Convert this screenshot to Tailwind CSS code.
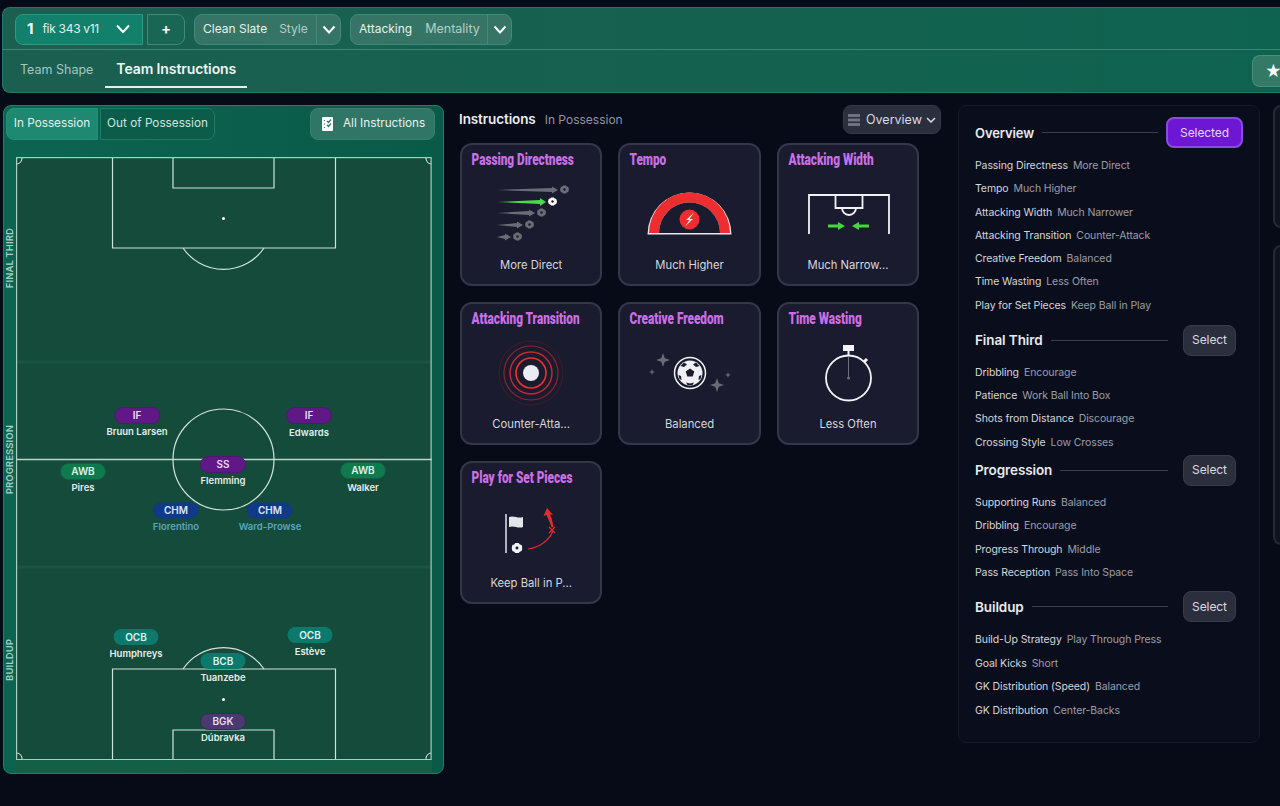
<!DOCTYPE html>
<html lang="en">
<head>
  <meta charset="UTF-8" />
  <title>Team Instructions</title>
  <script src="https://cdn.jsdelivr.net/npm/@tailwindcss/browser@4"></script>
</head>
<body class="bg-[#070b18] text-white font-['Inter','Noto_Sans',sans-serif] w-[1280px] h-[806px] overflow-hidden">
  <svg class="hidden">
    <symbol id="ball" viewBox="0 0 12 12">
      <path d="M4.2.6h3.6l1.3 1.5 1.9.6.6 2.1L12 6l-.4 1.3-.6 2-1.9.7-1.3 1.4H4.2L2.9 10 1 9.3l-.6-2L0 6l.4-1.2.6-2.1 1.9-.6z" fill="currentColor"/>
      <circle cx="6" cy="6" r="1.6" fill="#1a1b2e"/>
    </symbol>
  </svg>

  <!-- HEADER -->
  <header class="absolute left-[2px] right-0 top-[7px] h-[86px] rounded-l-lg border border-r-0 border-[#1f7a64] bg-gradient-to-r from-[#1b5f50] to-[#0e6350] text-[12px]">
    <div class="h-[42px] border-b border-[#3b8674] flex items-center pl-[12px] pt-[1px]">
      <div class="w-[128px] h-[31px] rounded-l-lg border border-[#2a9a82] bg-[#12806b] flex items-center pl-[11px]">
        <span class="font-bold text-[15px] mr-[9px]">1</span>
        <span class="text-[#e4f0ec] tracking-[-0.3px]">fik 343 v11</span>
        <svg class="ml-[16px]" width="16" height="10" viewBox="0 0 16 10"><path d="M2 1.5l6 6.5 6-6.500" fill="none" stroke="#fff" stroke-width="2"/></svg>
      </div>
      <div class="ml-[4px] w-[38px] h-[31px] rounded-r-lg border border-[#3f8a78] bg-[#1a6654] flex items-center justify-center text-[15px] font-semibold">+</div>
      <div class="ml-[9px] w-[147px] h-[31px] rounded-lg border border-[#3f8a78] bg-[#367565] flex items-center pl-[8px]">
        <span class="text-[#e8f0ed]">Clean Slate</span>
        <span class="ml-[12px] text-[#b5cdc6]">Style</span>
        <span class="ml-auto w-[24px] h-full border-l border-[#4b8576] flex items-center justify-center">
          <svg width="14" height="9" viewBox="0 0 14 9"><path d="M1.500 1.500l5.500 6 5.500-6" fill="none" stroke="#fff" stroke-width="2"/></svg>
        </span>
      </div>
      <div class="ml-[9px] w-[162px] h-[31px] rounded-lg border border-[#3f8a78] bg-[#367565] flex items-center pl-[8px]">
        <span class="text-[#e8f0ed]">Attacking</span>
        <span class="ml-[13px] text-[12.500px] text-[#b5cdc6]">Mentality</span>
        <span class="ml-auto w-[24px] h-full border-l border-[#4b8576] flex items-center justify-center">
          <svg width="14" height="9" viewBox="0 0 14 9"><path d="M1.500 1.500l5.500 6 5.500-6" fill="none" stroke="#fff" stroke-width="2"/></svg>
        </span>
      </div>
    </div>
    <div class="relative h-[43px] flex">
      <div class="pl-[17px] pt-[11px] text-[12.500px] text-[#a9c6be]">Team Shape</div>
      <div class="ml-[12px] w-[142px] h-[38px] px-[11px] pt-[8px] font-semibold text-[#eef6f3] border-b-2 border-[#dff2ec] text-[14px] tracking-[-0.1px]">Team Instructions</div>
      <div class="absolute right-0 top-[5px] w-[28px] h-[32px] rounded-l-lg border border-r-0 border-[#4c8e7e] bg-[#347866] flex items-center pl-[12px] text-[16px] leading-none">★</div>
    </div>
  </header>

  <main class="absolute left-[3px] top-[105px] flex items-start">
    <!-- PITCH PANEL -->
    <section class="w-[441px] h-[669px] rounded-lg border border-[#1f8069] bg-gradient-to-r from-[#0c6450] to-[#0a5a48] relative">
      <div class="flex items-start h-[51px] pt-[2px] pl-[2px] text-[11.750px]">
        <div class="w-[92px] h-[32px] rounded-l-lg bg-[#1e8870] border border-[#26917a] flex items-center justify-center text-[#e2f1ec]">In Possession</div>
        <div class="ml-[2px] w-[115px] h-[32px] rounded-r-lg bg-[#0c5c4a] border border-[#1a7d67] flex items-center justify-center text-[#cfe4de]">Out of Possession</div>
        <div class="ml-auto mr-[8px] w-[125px] h-[32px] rounded-lg bg-[#2f7667] border border-[#3a8070] flex items-center pl-[11px] text-[#e8f1ee]">
          <svg width="11" height="14" viewBox="0 0 11 14"><rect width="11" height="14" rx="1" fill="#fff"/><path d="M2 3.500h1M2 7h1M2 10.500h1M5 4l1.500 1.500L9 2.500M5 8l1.500 1.500L9 6.500" stroke="#2f7667" stroke-width="1.200" fill="none"/></svg>
          <span class="ml-[10px]">All Instructions</span>
        </div>
      </div>

      <!-- third labels -->
      <div class="absolute left-0 top-[51px] w-[12px] h-[603px] flex flex-col text-[9.500px] font-semibold text-[#a9cfc3] tracking-[0.1px]">
        <div class="h-[203px] flex items-center justify-center"><span class="[writing-mode:vertical-rl] rotate-180 whitespace-nowrap">FINAL THIRD</span></div>
        <div class="h-[200px] flex items-center justify-center"><span class="[writing-mode:vertical-rl] rotate-180 whitespace-nowrap">PROGRESSION</span></div>
        <div class="h-[200px] flex items-center justify-center"><span class="[writing-mode:vertical-rl] rotate-180 whitespace-nowrap">BUILDUP</span></div>
      </div>

      <!-- pitch -->
      <div class="absolute left-[12px] top-[51px] w-[416px] h-[603px] bg-[#144b3a]">
        <svg class="absolute inset-0" width="416" height="603" viewBox="0 0 416 603" fill="none" stroke="#cfe5dc" stroke-width="1.200">
          <path d="M0 205h416M0 410h416" stroke="#1a5543" stroke-width="3"/>
          <rect x="0.600" y="0.600" width="414.500" height="602" stroke="#a9cdbf"/>
          <path d="M96.500 1v90h223V1M157 1v30h101V1"/>
          <path d="M167 91a49 49 0 0 0 81 0"/>
          <path d="M0 302.500h416" stroke="#b9d6ca" stroke-width="1.500"/>
          <circle cx="207.500" cy="302.500" r="50.500"/>
          <path d="M96.500 602v-90h223v90M157 602v-29h101v29"/>
          <path d="M167 512a49 49 0 0 1 81 0"/>
          <path d="M1 7a6 6 0 0 0 5-6M415 7a6 6 0 0 1-5-6M1 596a6 6 0 0 1 5 6M415 596a6 6 0 0 0-5 6"/>
          <circle cx="207.500" cy="61.500" r="1.500" fill="#fff" stroke="none"/>
          <circle cx="207.500" cy="542.500" r="1.500" fill="#fff" stroke="none"/>
        </svg>

        <!-- players -->
        <div class="absolute left-[121px] top-[250px] -translate-x-1/2 flex flex-col items-center text-[9.500px] font-semibold whitespace-nowrap">
          <div class="w-[46px] h-[17px] rounded-full bg-[#5f1886] border border-[#4b1a6c] flex items-center justify-center text-[10px] text-[#eadcf3]">IF</div>
          <div class="mt-[1px] text-[#e4efea]">Bruun Larsen</div>
        </div>
        <div class="absolute left-[293px] top-[250px] -translate-x-1/2 flex flex-col items-center text-[9.500px] font-semibold whitespace-nowrap">
          <div class="w-[46px] h-[17px] rounded-full bg-[#5f1886] border border-[#4b1a6c] flex items-center justify-center text-[10px] text-[#eadcf3]">IF</div>
          <div class="mt-[2px] text-[#e4efea]">Edwards</div>
        </div>
        <div class="absolute left-[67px] top-[306px] -translate-x-1/2 flex flex-col items-center text-[9.500px] font-semibold whitespace-nowrap">
          <div class="w-[46px] h-[17px] rounded-full bg-[#0f7a4e] border border-[#125f44] flex items-center justify-center text-[10px] text-[#e0f2ea]">AWB</div>
          <div class="mt-[1px] text-[#e4efea]">Pires</div>
        </div>
        <div class="absolute left-[347px] top-[305px] -translate-x-1/2 flex flex-col items-center text-[9.500px] font-semibold whitespace-nowrap">
          <div class="w-[46px] h-[17px] rounded-full bg-[#0f7a4e] border border-[#125f44] flex items-center justify-center text-[10px] text-[#e0f2ea]">AWB</div>
          <div class="mt-[2px] text-[#e4efea]">Walker</div>
        </div>
        <div class="absolute left-[207px] top-[299px] -translate-x-1/2 flex flex-col items-center text-[9.500px] font-semibold whitespace-nowrap">
          <div class="w-[46px] h-[17px] rounded-full bg-[#5f1886] border border-[#4b1a6c] flex items-center justify-center text-[10px] text-[#eadcf3]">SS</div>
          <div class="mt-[1px] text-[#e4efea]">Flemming</div>
        </div>
        <div class="absolute left-[160px] top-[345px] -translate-x-1/2 flex flex-col items-center text-[9.500px] font-semibold whitespace-nowrap">
          <div class="w-[46px] h-[17px] rounded-full bg-[#10398a] border border-[#123f68] flex items-center justify-center text-[10px] text-[#dde7f5]">CHM</div>
          <div class="mt-[1px] text-[#5ba6bf]">Florentino</div>
        </div>
        <div class="absolute left-[254px] top-[345px] -translate-x-1/2 flex flex-col items-center text-[9.500px] font-semibold whitespace-nowrap">
          <div class="w-[46px] h-[17px] rounded-full bg-[#10398a] border border-[#123f68] flex items-center justify-center text-[10px] text-[#dde7f5]">CHM</div>
          <div class="mt-[1px] text-[#5ba6bf]">Ward-Prowse</div>
        </div>
        <div class="absolute left-[120px] top-[472px] -translate-x-1/2 flex flex-col items-center text-[9.500px] font-semibold whitespace-nowrap">
          <div class="w-[45px] h-[16px] rounded-full bg-[#0b7a6c] flex items-center justify-center text-[10px] text-[#dff1ed]">OCB</div>
          <div class="mt-[2px] text-[#e4efea]">Humphreys</div>
        </div>
        <div class="absolute left-[294px] top-[470px] -translate-x-1/2 flex flex-col items-center text-[9.500px] font-semibold whitespace-nowrap">
          <div class="w-[45px] h-[16px] rounded-full bg-[#0b7a6c] flex items-center justify-center text-[10px] text-[#dff1ed]">OCB</div>
          <div class="mt-[2px] text-[#e4efea]">Estève</div>
        </div>
        <div class="absolute left-[207px] top-[496px] -translate-x-1/2 flex flex-col items-center text-[9.500px] font-semibold whitespace-nowrap">
          <div class="w-[45px] h-[16px] rounded-full bg-[#0b7a6c] flex items-center justify-center text-[10px] text-[#dff1ed]">BCB</div>
          <div class="mt-[2px] text-[#e4efea]">Tuanzebe</div>
        </div>
        <div class="absolute left-[207px] top-[556px] -translate-x-1/2 flex flex-col items-center text-[9.500px] font-semibold whitespace-nowrap">
          <div class="w-[46px] h-[17px] rounded-full bg-[#4a3a70] border border-[#2f2f55] flex items-center justify-center text-[10px] text-[#e3dfee]">BGK</div>
          <div class="mt-[1px] text-[#e4efea]">Dúbravka</div>
        </div>
      </div>
      <div class="absolute left-[12px] top-[654px] w-[416px] h-[12px] bg-[#146047]"></div>
    </section>

    <!-- INSTRUCTION CARDS -->
    <section class="ml-[15px] w-[482px]">
      <div class="h-[38px] flex items-start">
        <div class="pt-[4px] text-[13.500px] font-semibold text-[#eceef2] tracking-[-0.1px]">Instructions</div>
        <div class="pt-[6px] ml-[9px] text-[12px] text-[#8f94a3]">In Possession</div>
        <div class="ml-auto w-[98px] h-[29px] rounded-lg bg-[#2b2e3d] border border-[#343848] flex items-center pl-[4px] pt-[1px] text-[12.500px] text-[#d9dbe2]">
          <svg width="12" height="12" viewBox="0 0 12 12"><path d="M0 0h12v3H0zM0 4.500h12v3H0zM0 9h12v3H0z" fill="#6f7280"/></svg>
          <span class="ml-[6px]">Overview</span>
          <svg class="ml-[4px]" width="10" height="6" viewBox="0 0 10 6"><path d="M1 1l4 4 4-4" fill="none" stroke="#d9dbe2" stroke-width="1.500"/></svg>
        </div>
      </div>

      <div class="grid grid-cols-[142.400px_142.400px_142.400px] gap-x-[16px] gap-y-[16px] pl-[1px]">
        <div class="h-[143px] rounded-xl border-2 border-[#343748] bg-[#1a1b2e] relative">
          <div class="pl-[13px] pt-[4px] h-[31px] font-['Roboto',sans-serif] font-black text-[16px] leading-[22px] text-[#cb6fe6] origin-left scale-x-[0.735] whitespace-nowrap">Passing Directness</div>
          <svg class="-ml-[2px]" width="143" height="80" viewBox="0 0 143 80">
            <path d="M37 14L92 12V10.500l6 3.500-6 3.500V16z" fill="#6b6c78"/>
            <path d="M37 26L80 24V22l6 4-6 4v-2z" fill="#44dd44"/>
            <path d="M37 37L69 35V33.500l6 3.500-6 3.500V39z" fill="#6b6c78"/>
            <path d="M37 49L57 47V45.500l6 3.500-6 3.500V51z" fill="#6b6c78"/>
            <path d="M37 61L45 59V57.500l6 3.500-6 3.500V63z" fill="#6b6c78"/>
            <use href="#ball" x="100" y="9" width="9" height="9" class="text-[#6b6c78]"/>
            <use href="#ball" x="88" y="21" width="9" height="9" class="text-white"/>
            <use href="#ball" x="77" y="32" width="9" height="9" class="text-[#6b6c78]"/>
            <use href="#ball" x="65" y="44" width="9" height="9" class="text-[#6b6c78]"/>
            <use href="#ball" x="53" y="56" width="9" height="9" class="text-[#6b6c78]"/>
          </svg>
          <div class="absolute left-0 right-0 top-[112px] text-center text-[11.250px] text-[#d6d8df]">More Direct</div>
        </div>

        <div class="h-[143px] rounded-xl border-2 border-[#343748] bg-[#1a1b2e] relative">
          <div class="pl-[13px] pt-[4px] h-[31px] font-['Roboto',sans-serif] font-black text-[16px] leading-[22px] text-[#cb6fe6] origin-left scale-x-[0.735] whitespace-nowrap">Tempo</div>
          <svg class="-ml-[2px]" width="143" height="80" viewBox="0 0 143 80">
            <path d="M29.500 58.500a42 42 0 0 1 84 0z" fill="#e8e8f0"/>
            <path d="M31 57a40.500 40.500 0 0 1 81 0h-10a30.500 30.500 0 0 0-61 0z" fill="#ee2e2e"/>
            <path d="M41 57a30.500 30.500 0 0 1 61 0z" fill="#1a1b2e"/>
            <circle cx="71.500" cy="43.500" r="10" fill="#ee2e2e"/>
            <path d="M76 36.500l-8 7.500h3.500L67 50.500l8-7.500h-3.500z" fill="#f3e6e6"/>
          </svg>
          <div class="absolute left-0 right-0 top-[112px] text-center text-[11.250px] text-[#d6d8df]">Much Higher</div>
        </div>

        <div class="h-[143px] rounded-xl border-2 border-[#343748] bg-[#1a1b2e] relative">
          <div class="pl-[13px] pt-[4px] h-[31px] font-['Roboto',sans-serif] font-black text-[16px] leading-[22px] text-[#cb6fe6] origin-left scale-x-[0.735] whitespace-nowrap">Attacking Width</div>
          <svg class="-ml-[2px]" width="143" height="80" viewBox="0 0 143 80">
            <path d="M32 58V19h80v39M58.500 19v13h27V19M65 32a7 7 0 0 0 14 0" fill="none" stroke="#f2f2f6" stroke-width="1.800"/>
            <path d="M51 48.500h10V46l7 4-7 4v-2.500H51z" fill="#47d63f"/>
            <path d="M92 48.500H82V46l-7 4 7 4v-2.500h10z" fill="#47d63f"/>
          </svg>
          <div class="absolute left-0 right-0 top-[112px] text-center text-[11.250px] text-[#d6d8df]">Much Narrow...</div>
        </div>

        <div class="h-[143px] rounded-xl border-2 border-[#343748] bg-[#1a1b2e] relative">
          <div class="pl-[13px] pt-[4px] h-[31px] font-['Roboto',sans-serif] font-black text-[16px] leading-[22px] text-[#cb6fe6] origin-left scale-x-[0.735] whitespace-nowrap">Attacking Transition</div>
          <svg class="-ml-[2px]" width="143" height="80" viewBox="0 0 143 80" fill="none">
            <circle cx="71" cy="38" r="32" stroke="#3d1d2c" stroke-width="1"/>
            <circle cx="71" cy="38" r="27" stroke="#8a2530" stroke-width="1.200"/>
            <circle cx="71" cy="38" r="21" stroke="#c62a30" stroke-width="1.400"/>
            <circle cx="71" cy="38" r="15" stroke="#ee3030" stroke-width="1.600"/>
            <circle cx="71" cy="38" r="8" fill="#ebebf5"/>
          </svg>
          <div class="absolute left-0 right-0 top-[112px] text-center text-[11.250px] text-[#d6d8df]">Counter-Atta...</div>
        </div>

        <div class="h-[143px] rounded-xl border-2 border-[#343748] bg-[#1a1b2e] relative">
          <div class="pl-[13px] pt-[4px] h-[31px] font-['Roboto',sans-serif] font-black text-[16px] leading-[22px] text-[#cb6fe6] origin-left scale-x-[0.735] whitespace-nowrap">Creative Freedom</div>
          <svg class="-ml-[2px]" width="143" height="80" viewBox="0 0 143 80" fill="none">
            <circle cx="72" cy="38" r="15.500" stroke="#f4f4f8" stroke-width="1.500"/>
            <circle cx="72" cy="38" r="12.500" fill="#efeff4"/>
            <path d="M72 33.500l4.300 3-1.600 5h-5.400l-1.600-5z" fill="#1a1b2e"/>
            <path d="M66 27.500l3 2-3 2.500-3.500-1zM78 27.500l-3 2 3 2.500 3.500-1zM60.500 40l2.500 1 .5 4-2-1zM83.500 40l-2.500 1-.5 4 2-1zM68 47.500l4 1 4-1-1.500 2.500h-5z" fill="#1a1b2e"/>
            <path d="M45 18l1.800 5.200L52 25l-5.200 1.800L45 32l-1.800-5.200L38 25l5.200-1.800z" fill="#696a78"/>
            <path d="M34 34l.8 2.200L37 37l-2.200.8L34 40l-.8-2.200L31 37l2.200-.8z" fill="#696a78"/>
            <path d="M99 43l1.800 5.200L106 50l-5.200 1.800L99 57l-1.800-5.200L92 50l5.200-1.800z" fill="#696a78"/>
            <path d="M110 37l.8 2.200L113 40l-2.200.8-.8 2.200-.8-2.200L107 40l2.200-.8z" fill="#696a78"/>
          </svg>
          <div class="absolute left-0 right-0 top-[112px] text-center text-[11.250px] text-[#d6d8df]">Balanced</div>
        </div>

        <div class="h-[143px] rounded-xl border-2 border-[#343748] bg-[#1a1b2e] relative">
          <div class="pl-[13px] pt-[4px] h-[31px] font-['Roboto',sans-serif] font-black text-[16px] leading-[22px] text-[#cb6fe6] origin-left scale-x-[0.735] whitespace-nowrap">Time Wasting</div>
          <svg class="-ml-[2px]" width="143" height="80" viewBox="0 0 143 80" fill="none">
            <circle cx="71.500" cy="43" r="22.500" stroke="#f4f4f8" stroke-width="1.800"/>
            <path d="M66 10h11v6H66zM70.500 16h2v5h-2z" fill="#f4f4f8"/>
            <path d="M87 27l3-3" stroke="#f4f4f8" stroke-width="3"/>
            <path d="M71.500 22v21" stroke="#6e6f7c" stroke-width="1"/>
            <circle cx="71.500" cy="43" r="1.500" fill="#6e6f7c"/>
          </svg>
          <div class="absolute left-0 right-0 top-[112px] text-center text-[11.250px] text-[#d6d8df]">Less Often</div>
        </div>

        <div class="h-[143px] rounded-xl border-2 border-[#343748] bg-[#1a1b2e] relative">
          <div class="pl-[13px] pt-[4px] h-[31px] font-['Roboto',sans-serif] font-black text-[16px] leading-[22px] text-[#cb6fe6] origin-left scale-x-[0.735] whitespace-nowrap">Play for Set Pieces</div>
          <svg class="-ml-[2px]" width="143" height="80" viewBox="0 0 143 80" fill="none">
            <path d="M46 20v39" stroke="#e4e4ec" stroke-width="1.500"/>
            <path d="M49 23c5-2 9 2 14 0v10c-5 2-9-2-14 0z" fill="#e4e4ec"/>
            <use href="#ball" x="51.500" y="48.500" width="11" height="11" class="text-[#f2f2f6]"/>
            <path d="M68 55c12-2 21-9 25-18" stroke="#e42c2c" stroke-width="1.200"/>
            <path d="M89 33l6 6M95 33l-6 6" stroke="#e42c2c" stroke-width="1.200"/>
            <path d="M93.500 33C92.500 27 91.500 23 90 20.500l3 .5-6-7-3.500 8 3-1C88 25 90.500 29 91.500 33.500z" fill="#e42c2c"/>
          </svg>
          <div class="absolute left-0 right-0 top-[112px] text-center text-[11.250px] text-[#d6d8df]">Keep Ball in P...</div>
        </div>
      </div>
    </section>

    <!-- SUMMARY PANEL -->
    <aside class="ml-[17px] w-[302px] h-[638px] rounded-lg border border-[#151a2a] bg-[#0a0e1c] pl-[16px] pr-[15px] pt-[11px] text-[10.500px] leading-[14px] tracking-[-0.1px]">
      <div class="flex items-center h-[31px]">
        <span class="text-[13px] font-semibold text-[#e8eaee]">Overview</span>
        <span class="ml-[8px] flex-1 h-px bg-[#3a3e4c]"></span>
        <span class="ml-[8px] mr-[1px] w-[77px] h-[31px] rounded-lg bg-[#6d16d4] border-2 border-[#8c4be0] flex items-center justify-center text-[12px] text-[#e6d8fb]">Selected</span>
      </div>
      <div class="mt-[11px] flex flex-col gap-y-[9.300px]">
        <p><span class="text-[#d4d6dc]">Passing Directness</span><span class="ml-[5px] text-[#9a9eaa]">More Direct</span></p>
        <p><span class="text-[#d4d6dc]">Tempo</span><span class="ml-[5px] text-[#9a9eaa]">Much Higher</span></p>
        <p><span class="text-[#d4d6dc]">Attacking Width</span><span class="ml-[5px] text-[#9a9eaa]">Much Narrower</span></p>
        <p><span class="text-[#d4d6dc]">Attacking Transition</span><span class="ml-[5px] text-[#9a9eaa]">Counter-Attack</span></p>
        <p><span class="text-[#d4d6dc]">Creative Freedom</span><span class="ml-[5px] text-[#9a9eaa]">Balanced</span></p>
        <p><span class="text-[#d4d6dc]">Time Wasting</span><span class="ml-[5px] text-[#9a9eaa]">Less Often</span></p>
        <p><span class="text-[#d4d6dc]">Play for Set Pieces</span><span class="ml-[5px] text-[#9a9eaa]">Keep Ball in Play</span></p>
      </div>

      <div class="mt-[12px] flex items-center h-[31px]">
        <span class="text-[13.500px] font-semibold text-[#e8eaee]">Final Third</span>
        <span class="ml-[8px] flex-1 h-px bg-[#3a3e4c]"></span>
        <span class="ml-[15px] mr-[8px] w-[53px] h-[31px] rounded-lg bg-[#2b2e3d] border border-[#383b4a] flex items-center justify-center text-[12px] text-[#d9dbe2]">Select</span>
      </div>
      <div class="mt-[10px] flex flex-col gap-y-[9.300px]">
        <p><span class="text-[#d4d6dc]">Dribbling</span><span class="ml-[5px] text-[#9a9eaa]">Encourage</span></p>
        <p><span class="text-[#d4d6dc]">Patience</span><span class="ml-[5px] text-[#9a9eaa]">Work Ball Into Box</span></p>
        <p><span class="text-[#d4d6dc]">Shots from Distance</span><span class="ml-[5px] text-[#9a9eaa]">Discourage</span></p>
        <p><span class="text-[#d4d6dc]">Crossing Style</span><span class="ml-[5px] text-[#9a9eaa]">Low Crosses</span></p>
      </div>

      <div class="mt-[5px] flex items-center h-[31px]">
        <span class="text-[13.500px] font-semibold text-[#e8eaee]">Progression</span>
        <span class="ml-[8px] flex-1 h-px bg-[#3a3e4c]"></span>
        <span class="ml-[15px] mr-[8px] w-[53px] h-[31px] rounded-lg bg-[#2b2e3d] border border-[#383b4a] flex items-center justify-center text-[12px] text-[#d9dbe2]">Select</span>
      </div>
      <div class="mt-[10px] flex flex-col gap-y-[9.500px]">
        <p><span class="text-[#d4d6dc]">Supporting Runs</span><span class="ml-[5px] text-[#9a9eaa]">Balanced</span></p>
        <p><span class="text-[#d4d6dc]">Dribbling</span><span class="ml-[5px] text-[#9a9eaa]">Encourage</span></p>
        <p><span class="text-[#d4d6dc]">Progress Through</span><span class="ml-[5px] text-[#9a9eaa]">Middle</span></p>
        <p><span class="text-[#d4d6dc]">Pass Reception</span><span class="ml-[5px] text-[#9a9eaa]">Pass Into Space</span></p>
      </div>

      <div class="mt-[11px] flex items-center h-[31px]">
        <span class="text-[13.500px] font-semibold text-[#e8eaee]">Buildup</span>
        <span class="ml-[8px] flex-1 h-px bg-[#3a3e4c]"></span>
        <span class="ml-[15px] mr-[8px] w-[53px] h-[31px] rounded-lg bg-[#2b2e3d] border border-[#383b4a] flex items-center justify-center text-[12px] text-[#d9dbe2]">Select</span>
      </div>
      <div class="mt-[11px] flex flex-col gap-y-[9.600px]">
        <p><span class="text-[#d4d6dc]">Build-Up Strategy</span><span class="ml-[5px] text-[#9a9eaa]">Play Through Press</span></p>
        <p><span class="text-[#d4d6dc]">Goal Kicks</span><span class="ml-[5px] text-[#9a9eaa]">Short</span></p>
        <p><span class="text-[#d4d6dc]">GK Distribution (Speed)</span><span class="ml-[5px] text-[#9a9eaa]">Balanced</span></p>
        <p><span class="text-[#d4d6dc]">GK Distribution</span><span class="ml-[5px] text-[#9a9eaa]">Center-Backs</span></p>
      </div>
    </aside>

    <!-- clipped panels on the right edge -->
    <div class="ml-[13px] w-[20px] flex flex-col gap-y-[17px]">
      <div class="h-[123px] rounded-l-lg border-2 border-r-0 border-[#252838] bg-[#10121f]"></div>
      <div class="h-[300px] rounded-l-lg border-2 border-r-0 border-[#252838] bg-[#10121f]"></div>
    </div>
  </main>
</body>
</html>
